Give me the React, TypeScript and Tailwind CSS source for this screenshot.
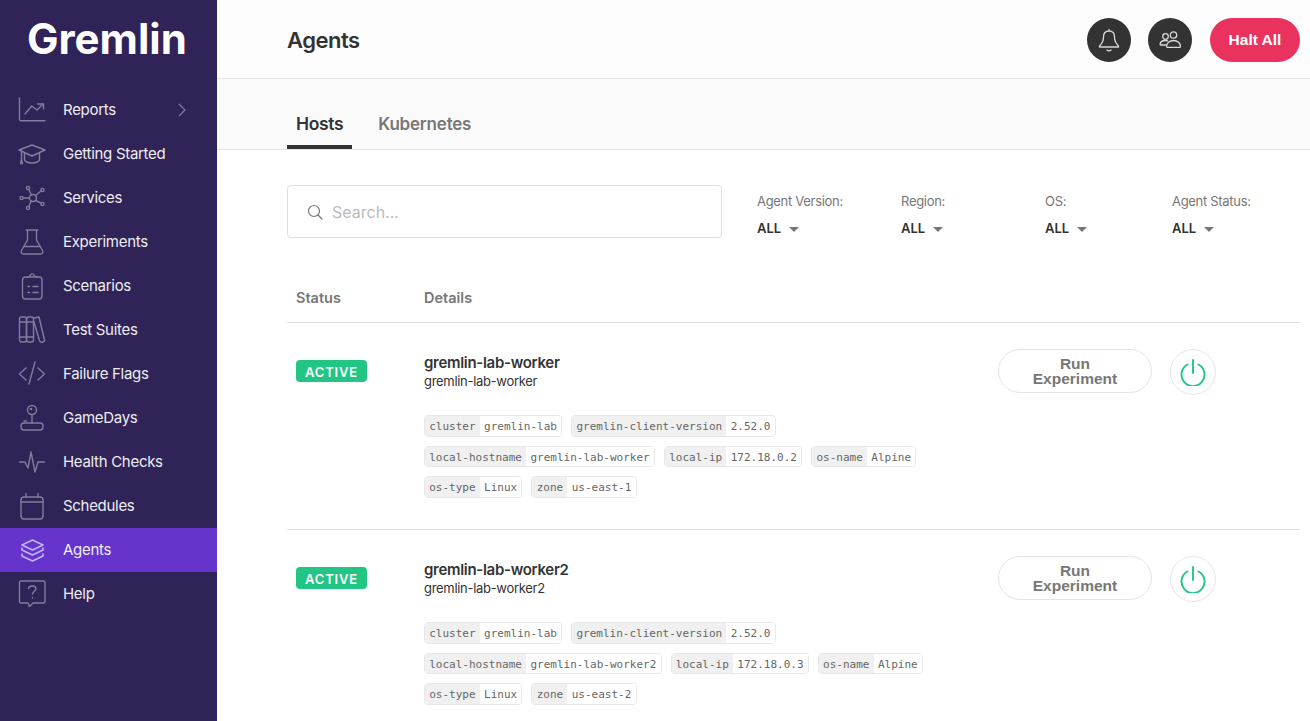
import React from "react";

const Ic = ({ children, color = "#837d9b", sw = 1.4 }: { children: React.ReactNode; color?: string; sw?: number }) => (
  <svg width={28} height={28} viewBox="0 0 28 28" fill="none" stroke={color} strokeWidth={sw} strokeLinecap="round" strokeLinejoin="round">
    {children}
  </svg>
);

const icons: Record<string, React.ReactNode> = {
  Reports: (
    <Ic>
      <path d="M1.500 2v21.200a1.500 1.500 0 0 0 1.500 1.500H27" />
      <path d="M7 18l6.700-8 5.300 4 6-6" />
      <path d="M19.500 8h6v5" />
    </Ic>
  ),
  "Getting Started": (
    <Ic>
      <path d="M1 10 14 5l13 5-13 6z" />
      <path d="M6.500 13v6.500c0 2 3.500 3.500 7.500 3.500s7.500-1.500 7.500-3.500V13" />
      <path d="M3.500 11v9" />
      <path d="M2.500 23.500l1-3.500 1 3.500z" />
    </Ic>
  ),
  Services: (
    <Ic>
      <circle cx="15" cy="14" r="3.500" />
      <circle cx="3.500" cy="14" r="1.600" />
      <circle cx="10" cy="4" r="1.600" />
      <circle cx="24.500" cy="6" r="1.600" />
      <circle cx="24.500" cy="20" r="1.600" />
      <circle cx="10" cy="24" r="1.600" />
      <path d="M5.200 14h6.300M10.800 5.500l2.500 5.500M23 7l-5.500 4.500M23 19l-5.500-2.500M10.800 22.500l2.500-5.500" />
    </Ic>
  ),
  Experiments: (
    <Ic>
      <path d="M8 2h12M9.500 2v10L3.500 22.500c-1 2 0 3.500 2 3.500h17c2 0 3-1.500 2-3.500L18.500 12V2" />
      <path d="M6 18.500h16" />
    </Ic>
  ),
  Scenarios: (
    <Ic>
      <rect x="4.500" y="5" width="19.500" height="22" rx="3" />
      <path d="M9 5c2 0 3-.5 3.500-2 .5-1.500 3-1.500 3.500 0 .5 1.500 1.500 2 3.500 2" />
      <path d="M10 14.500h1.500M15 14.500h5M10 20.500h1.500M15 20.500h5" />
    </Ic>
  ),
  "Test Suites": (
    <Ic>
      <rect x="1.500" y="1" width="7" height="25" rx="2" />
      <rect x="8.500" y="1" width="7" height="25" rx="2" />
      <path d="M16 2l5-1 5.500 23c.3 1.500-1 2-2 2.200-1.500.3-2.500-.2-3-1.700L16 6" />
      <path d="M1.500 6h14M1.500 21h14" />
    </Ic>
  ),
  "Failure Flags": (
    <Ic>
      <path d="M8 8 1.500 14 8 20M20 8l6.500 6-6.500 6M17 2l-6 22" />
    </Ic>
  ),
  GameDays: (
    <Ic>
      <circle cx="14" cy="6" r="4.500" />
      <circle cx="13" cy="5" r=".6" />
      <path d="M14 10.500V19M6 17h2.500" />
      <rect x="3" y="19" width="22" height="7" rx="3" />
    </Ic>
  ),
  "Health Checks": (
    <Ic>
      <path d="M1.500 14H7l3 6L13 4l4 20 3-10h6.500" />
    </Ic>
  ),
  Schedules: (
    <Ic>
      <rect x="3" y="5" width="22" height="22" rx="3" />
      <path d="M3 10h22M8 1.500V5M20 1.500V5" />
    </Ic>
  ),
  Agents: (
    <Ic color="#c0b6fb" sw={1.6}>
      <path d="M14.500 4 25 9l-10.500 5L4 9z" />
      <path d="M4 12v2l10.500 5L25 14v-2" />
      <path d="M4 18v2l10.500 5L25 20v-2" />
    </Ic>
  ),
  Help: (
    <Ic>
      <path d="M3 1h22.500A1.500 1.500 0 0 1 27 2.500v19a1.500 1.500 0 0 1-1.500 1.500H15l-3.500 3.500L10 23H3a1.500 1.500 0 0 1-1.500-1.500v-19A1.500 1.500 0 0 1 3 1z" />
      <path d="M10.500 8.500c.5-3 7-3.500 7.500 0 .3 2.500-3.500 3-3.500 5.500M14.500 17.500v.5" />
    </Ic>
  ),
};

const nav = ["Reports", "Getting Started", "Services", "Experiments", "Scenarios", "Test Suites", "Failure Flags", "GameDays", "Health Checks", "Schedules", "Agents", "Help"];

function Sidebar() {
  return (
    <aside className="w-[217px] shrink-0 bg-[#2f2357] h-full">
      <div className="h-[88px] pl-[27px] pt-[14px]">
        <div className="text-white font-bold text-[42px] leading-[50px] font-['Inter',sans-serif]">Gremlin</div>
      </div>
      {nav.map((n) => (
        <div key={n} className={`h-11 flex items-center pl-[18px] ${n === "Agents" ? "bg-[#6633cc]" : ""}`}>
          <div className="w-[28px] h-[28px] flex items-center justify-center">{icons[n]}</div>
          <span className="ml-[17px] text-[15px] tracking-[-0.3px] text-[#eeedf3]">{n}</span>
          {n === "Reports" && (
            <svg className="ml-auto mr-[30px]" width="10" height="14" viewBox="0 0 10 14" fill="none" stroke="#837d9b" strokeWidth="1.200">
              <path d="M2 1l6 6-6 6" />
            </svg>
          )}
        </div>
      ))}
    </aside>
  );
}

function Header() {
  return (
    <header className="h-[79px] shrink-0 bg-[#fdfdfd] border-b border-[#e5e5e5] flex items-center pl-[70px] pr-[10px] pt-[2px]">
      <h1 className="text-[22px] font-semibold text-[#333] tracking-[-0.5px]">Agents</h1>
      <div className="ml-auto flex items-center">
        <div className="w-11 h-11 rounded-full bg-[#333] flex items-center justify-center">
          <svg width="22" height="24" viewBox="0 0 22 24" fill="none" stroke="#d8d8d8" strokeWidth="1.300" strokeLinejoin="round" strokeLinecap="round">
            <path d="M11 1.500v1.500M11 3c-3.500 0-5.500 2.500-5.500 6 0 5-2 7-4 9v1h19v-1c-2-2-4-4-4-9 0-3.500-2-6-5.500-6z" />
            <path d="M9 22c1 1 3 1 4 0" />
          </svg>
        </div>
        <div className="w-11 h-11 rounded-full bg-[#333] flex items-center justify-center ml-[17px]">
          <svg width="22" height="18" viewBox="0 0 22 18" fill="none" stroke="#d8d8d8" strokeWidth="1.300" strokeLinejoin="round">
            <circle cx="6.500" cy="5.500" r="2.800" />
            <circle cx="14.500" cy="4" r="3.200" />
            <path d="M1 14c0-3 2.500-4.500 5.500-4.500 1 0 2 .2 2.500.5M1 14h6" />
            <path d="M7.500 15.500c0-3.500 3-6 7-6s7 2.500 7 6c0 .5-.3.800-1 .8H8.500c-.7 0-1-.3-1-.8z" />
          </svg>
        </div>
        <button className="ml-[18px] w-[90px] h-11 rounded-full bg-[#ea325f] text-white text-[15.500px] font-bold font-['Liberation_Sans',sans-serif]">Halt All</button>
      </div>
    </header>
  );
}

function Tabs() {
  return (
    <div className="h-[71px] shrink-0 bg-[#fafafa] border-b border-[#e5e5e5] flex items-end pl-[70px]">
      <div className="h-[48px] px-[9px] border-b-4 border-[#333] text-[17.500px] font-semibold text-[#333] leading-[26px] pt-[10px] tracking-[-0.35px]">Hosts</div>
      <div className="h-[48px] ml-[17px] px-[9px] text-[17px] font-semibold text-[#777] leading-[26px] pt-[10px] tracking-[-0.2px]">Kubernetes</div>
    </div>
  );
}

function Filter({ label, w }: { label: string; w: string }) {
  return (
    <div className={`${w} shrink-0`}>
      <div className="text-[13px] leading-[16px] text-[#777] tracking-[-0.3px] -mt-px">{label}</div>
      <div className="mt-[12px] flex items-center h-[16px]">
        <span className="text-[13px] font-semibold text-[#333]">ALL</span>
        <span className="ml-[8px] mt-[1px] w-0 h-0 border-l-[5px] border-r-[5px] border-t-[5px] border-l-transparent border-r-transparent border-t-[#777]" />
      </div>
    </div>
  );
}

function Tag({ k, v }: { k: string; v: string }) {
  return (
    <span className="inline-flex h-[21.500px] border border-[#e8e8e8] rounded-[4px] overflow-hidden text-[11px] leading-[21px] text-[#666] font-['DejaVu_Sans_Mono',monospace]">
      <span className="bg-[#f0f0f0] px-[4.250px]">{k}</span>
      <span className="bg-white px-[4.250px]">{v}</span>
    </span>
  );
}

function Row({ name, ip, zone }: { name: string; ip: string; zone: string }) {
  return (
    <div className="h-[207px] border-b border-[#e0e0e0] flex shrink-0">
      <div className="w-[137px] pl-[9px] pt-[37px] shrink-0 flex items-start">
        <span className="flex items-center justify-center w-[71px] h-[22px] pt-[3px] rounded-[4px] bg-[#21c685] text-white text-[13px] font-semibold tracking-[0.8px]">ACTIVE</span>
      </div>
      <div className="flex-1 pt-[30px]">
        <div className="text-[15px] leading-[20px] font-semibold text-[#333] tracking-[-0.3px]">{name}</div>
        <div className="text-[13px] leading-[17px] text-[#333] tracking-[-0.3px]">{name}</div>
        <div className="mt-[25px] w-[520px] flex flex-wrap gap-x-[9px] gap-y-[9px]">
          <Tag k="cluster" v="gremlin-lab" />
          <Tag k="gremlin-client-version" v="2.52.0" />
          <Tag k="local-hostname" v={name} />
          <Tag k="local-ip" v={ip} />
          <Tag k="os-name" v="Alpine" />
          <Tag k="os-type" v="Linux" />
          <Tag k="zone" v={zone} />
        </div>
      </div>
      <div className="pt-[26px] pr-[84px] flex items-start shrink-0">
        <button className="w-[154px] h-[44px] rounded-full border border-[#e5e5e5] bg-white text-[15.500px] leading-[15px] font-bold text-[#777] font-['Liberation_Sans',sans-serif]">
          Run<br />Experiment
        </button>
        <div className="ml-[18px] w-[46px] h-[46px] rounded-full border border-[#e5e5e5] flex items-center justify-center">
          <svg width="26" height="28" viewBox="0 0 26 28" fill="none" stroke="#21c685" strokeWidth="1.900" strokeLinecap="round">
            <path d="M13 2v13" />
            <path d="M7.500 6.500a11.500 11.500 0 1 0 11 0" />
          </svg>
        </div>
      </div>
    </div>
  );
}

export default function App() {
  return (
    <div className="h-[721px] w-[1310px] flex overflow-hidden bg-white font-['Inter',sans-serif]">
      <Sidebar />
      <main className="flex-1 flex flex-col min-w-0 h-full overflow-hidden">
        <Header />
        <Tabs />
        <div className="pl-[70px] pr-[10px] flex flex-col">
          <div className="pt-[35px] flex shrink-0">
            <div className="w-[435px] h-[53px] border border-[#e0e0e0] rounded-[4px] flex items-center pl-[19px] shrink-0">
              <svg width="16" height="16" viewBox="0 0 16 16" fill="none" stroke="#777" strokeWidth="1.200" strokeLinecap="round">
                <circle cx="7" cy="7" r="5.500" />
                <path d="M11 11l4 4" />
              </svg>
              <span className="ml-[9px] text-[16px] text-[#bbb]">Search...</span>
            </div>
            <div className="ml-[35px] pt-[9px] flex">
              <Filter label="Agent Version:" w="w-[144px]" />
              <Filter label="Region:" w="w-[144px]" />
              <Filter label="OS:" w="w-[127px]" />
              <Filter label="Agent Status:" w="w-[100px]" />
            </div>
          </div>
          <div className="mt-[35px] h-[50px] border-b border-[#e0e0e0] flex text-[14.500px] font-semibold text-[#777] pt-[15px] leading-[20px] shrink-0">
            <span className="w-[137px] pl-[9px]">Status</span>
            <span>Details</span>
          </div>
          <Row name="gremlin-lab-worker" ip="172.18.0.2" zone="us-east-1" />
          <Row name="gremlin-lab-worker2" ip="172.18.0.3" zone="us-east-2" />
        </div>
      </main>
    </div>
  );
}
